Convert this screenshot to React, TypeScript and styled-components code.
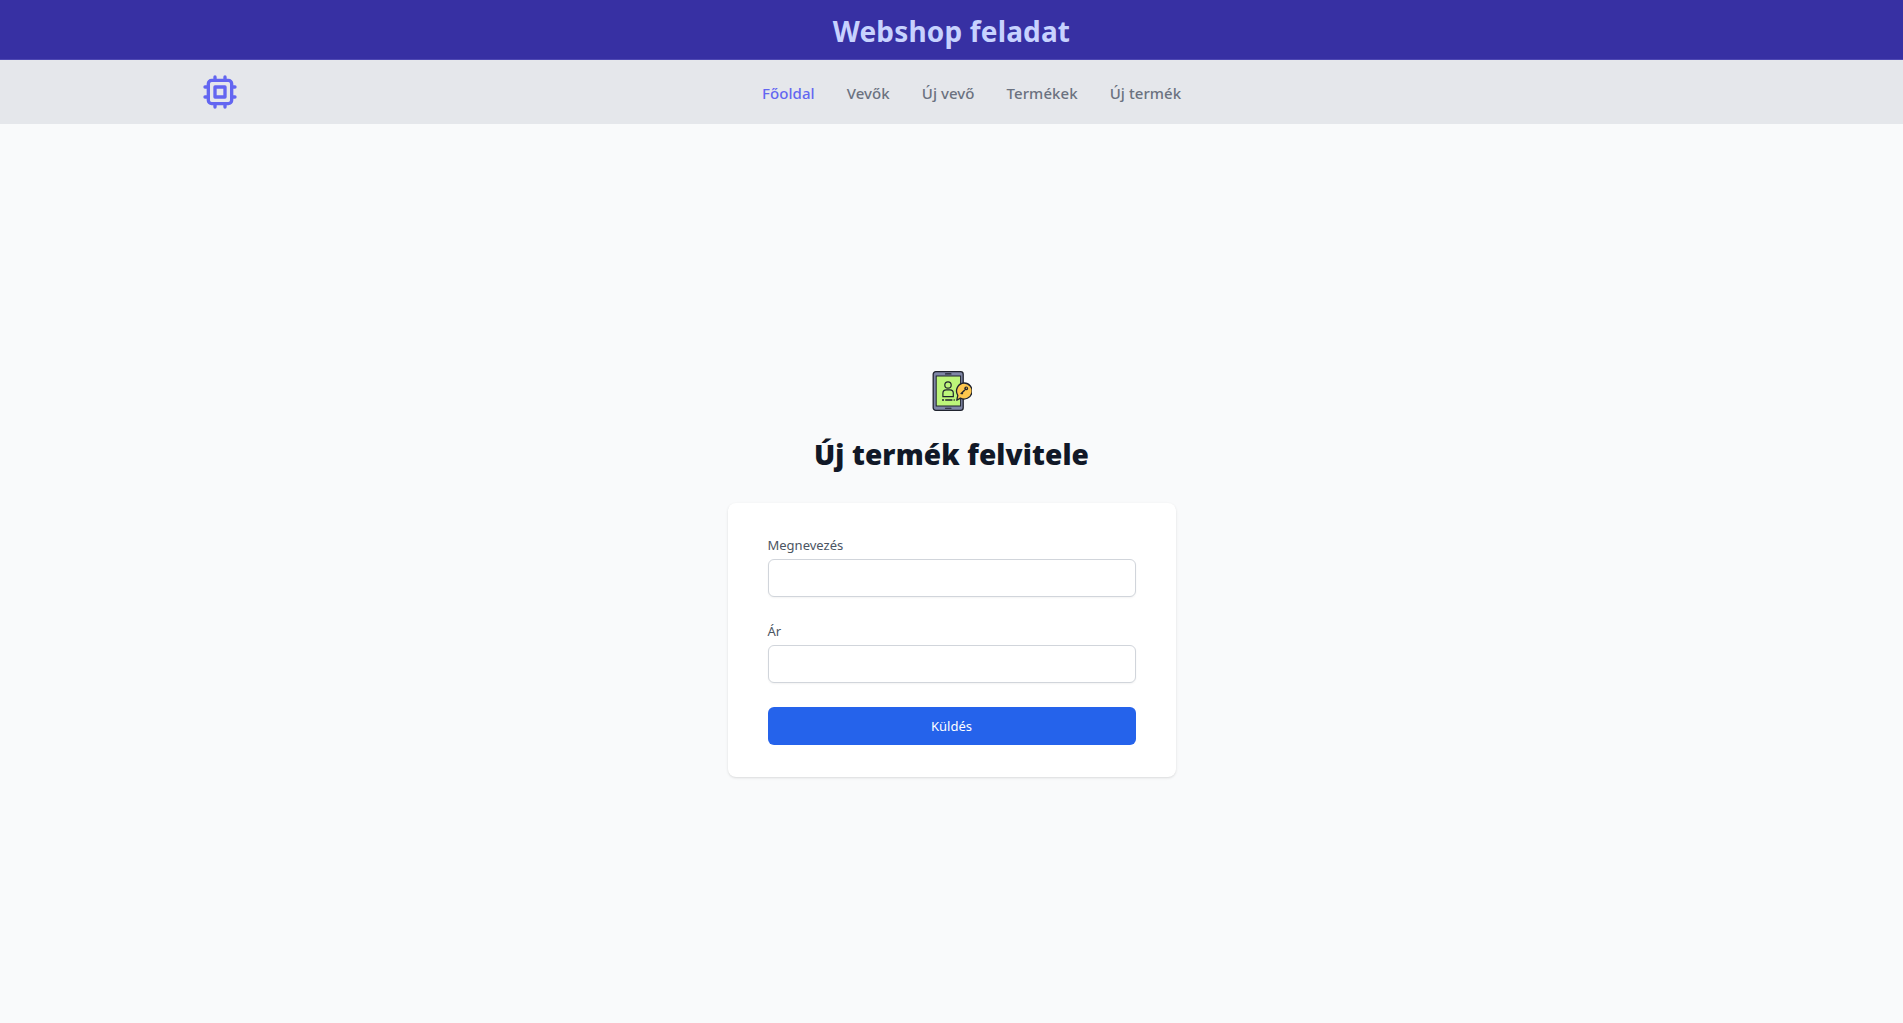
import React from "react";
import styled, { createGlobalStyle } from "styled-components";

const Global = createGlobalStyle`
  html, body { margin: 0; padding: 0; background: #f9fafb; }
  body { font-family: "Noto Sans", "Open Sans", "Liberation Sans", sans-serif; }
  * { box-sizing: border-box; }
`;

const Page = styled.div`
  min-height: 1023px;
  display: flex;
  flex-direction: column;
  background: #f9fafb;
`;

const Banner = styled.header`
  height: 60px;
  background: #3730a3;
  border-bottom: 1px solid #4f49b3;
  display: flex;
  align-items: center;
  justify-content: center;
`;

const BannerTitle = styled.h1`
  margin: 0;
  font-size: 28px;
  line-height: 36px;
  font-weight: 700;
  letter-spacing: 0.16px;
  color: #c7d2fe;
  padding-top: 2px;
`;

const NavBar = styled.nav`
  height: 64px;
  background: #e5e7eb;
  padding: 0 200px;
  display: flex;
  align-items: center;
  gap: 522px;
`;

const NavLinks = styled.div`
  display: flex;
  gap: 32px;
  padding-top: 2px;
`;

const NavLink = styled.a<{ $active?: boolean }>`
  font-size: 15px;
  line-height: 24px;
  font-weight: 500;
  letter-spacing: 0.07px;
  color: ${(p) => (p.$active ? "#6366f1" : "#6b7280")};
  text-decoration: none;
`;

const Main = styled.main`
  flex: 1;
  display: flex;
  flex-direction: column;
  align-items: center;
  justify-content: center;
`;

const FormIcon = styled.svg`
  width: 40px;
  height: 40px;
  display: block;
`;

const Heading = styled.h2`
  margin: 25px 0 0;
  font-size: 28px;
  line-height: 36px;
  font-weight: 900;
  letter-spacing: 0.13px;
  color: #111827;
  text-align: center;
`;

const Card = styled.form`
  margin-top: 31px;
  width: 448px;
  background: #fff;
  border-radius: 8px;
  padding: 32px 40px;
  box-shadow: 0 1px 3px 0 rgba(0, 0, 0, 0.1), 0 1px 2px -1px rgba(0, 0, 0, 0.1);
  display: flex;
  flex-direction: column;
  gap: 24px;
`;

const Field = styled.div`
  display: flex;
  flex-direction: column;
`;

const Label = styled.label`
  font-size: 13px;
  line-height: 20px;
  color: #4b5563;
  margin-bottom: 4px;
`;

const Input = styled.input`
  height: 38px;
  width: 100%;
  background: #fff;
  border: 1px solid #d1d5db;
  border-radius: 6px;
  box-shadow: 0 1px 2px 0 rgba(0, 0, 0, 0.05);
`;

const Submit = styled.button`
  height: 38px;
  width: 100%;
  border: 0;
  border-radius: 6px;
  background: #2563eb;
  color: #fff;
  font-family: inherit;
  font-size: 13px;
`;

function Chip() {
  return (
    <svg width="40" height="40" viewBox="0 0 24 24" fill="none" stroke="#6366f1" strokeWidth="2" strokeLinecap="round" strokeLinejoin="round" style={{ display: "block", flex: "none" }}>
      <path d="M9 3v2m6-2v2M9 19v2m6-2v2M5 9H3m2 6H3m18-6h-2m2 6h-2M7 19h10a2 2 0 0 0 2-2V7a2 2 0 0 0-2-2H7a2 2 0 0 0-2 2v10a2 2 0 0 0 2 2zM9 9h6v6H9V9z" />
    </svg>
  );
}

function TabletKey() {
  return (
    <FormIcon viewBox="0 0 40 40">
      <rect x="1.2" y="0.7" width="30" height="38.6" rx="2.6" fill="#7f86a6" stroke="#20232e" strokeWidth="1.3" />
      <rect x="4.2" y="5" width="24.4" height="30" fill="#bdf57a" stroke="#20232e" strokeWidth="1" />
      <path d="M13.5 2.9h5.5M13.5 37.2h5.5" stroke="#20232e" strokeWidth="1.1" strokeLinecap="round" />
      <circle cx="16" cy="14" r="3.2" fill="#bdf57a" stroke="#20232e" strokeWidth="1.2" />
      <path d="M10.9 25.6v-3.4c0-2 1.5-3.4 3.4-3.4h3.6c1.9 0 3.4 1.4 3.4 3.4v3.4z" fill="#bdf57a" stroke="#20232e" strokeWidth="1.2" />
      <path d="M10 29h2M13.2 29h7.2M21.6 29h1.2" stroke="#20232e" strokeWidth="1.4" />
      <path d="M32 12a8 8 0 1 1-3.6 15.1l-3.6 2.1 1-4.9A8 8 0 0 1 32 12z" fill="#fdc64e" stroke="#20232e" strokeWidth="1.3" strokeLinejoin="round" />
      <circle cx="34.2" cy="17.4" r="1.9" fill="#20232e" />
      <circle cx="34.4" cy="17.2" r="0.6" fill="#fdc64e" />
      <path d="M32.8 18.9l-4.1 4.1M29.4 21.6l1.4 1.4" stroke="#20232e" strokeWidth="1.4" />
    </FormIcon>
  );
}

export default function App() {
  return (
    <Page>
      <Global />
      <Banner>
        <BannerTitle>Webshop feladat</BannerTitle>
      </Banner>
      <NavBar>
        <Chip />
        <NavLinks>
          <NavLink href="#" $active>Főoldal</NavLink>
          <NavLink href="#">Vevők</NavLink>
          <NavLink href="#">Új vevő</NavLink>
          <NavLink href="#">Termékek</NavLink>
          <NavLink href="#">Új termék</NavLink>
        </NavLinks>
      </NavBar>
      <Main>
        <TabletKey />
        <Heading>Új termék felvitele</Heading>
        <Card onSubmit={(e) => e.preventDefault()}>
          <Field>
            <Label>Megnevezés</Label>
            <Input type="text" />
          </Field>
          <Field>
            <Label>Ár</Label>
            <Input type="text" />
          </Field>
          <Submit type="submit">Küldés</Submit>
        </Card>
      </Main>
    </Page>
  );
}
